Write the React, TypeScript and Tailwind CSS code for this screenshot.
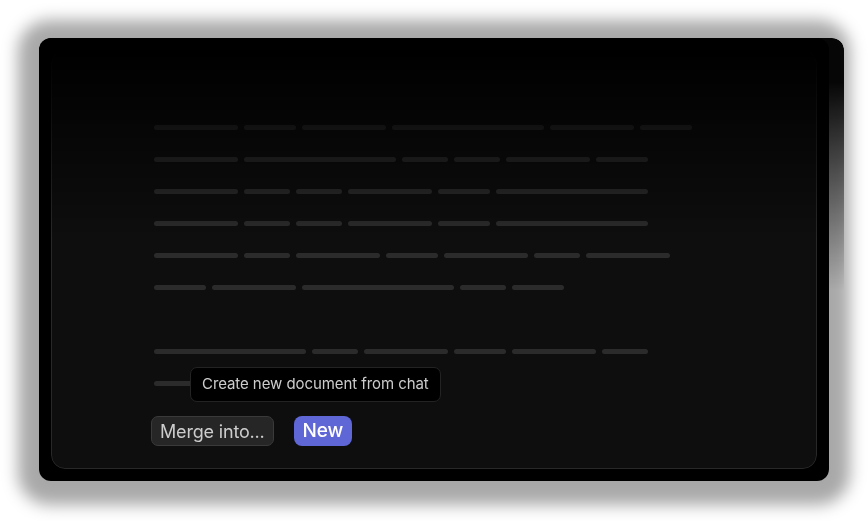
import React from "react";

const rows: number[][] = [
  [84, 52, 84, 152, 84, 52],
  [84, 152, 46, 46, 84, 52],
  [84, 46, 46, 84, 52, 152],
  [84, 46, 46, 84, 52, 152],
  [84, 46, 84, 52, 84, 46, 84],
  [52, 84, 152, 46, 52],
  [],
  [152, 46, 84, 52, 84, 46],
  [84, 46, 84],
];

function Bar({ w }: { w: number }) {
  return <div className="h-[5px] rounded-full bg-[#2b2b2b]" style={{ width: w }} />;
}

export default function App() {
  return (
    <div className="relative h-[521px] w-[868px] overflow-hidden bg-white pl-[39px] pt-[38px] font-['Inter','Noto_Sans',sans-serif]">
      {/* back layer peeking on the right, fading downwards */}
      <div className="absolute left-[39px] top-[38px] h-[443px] w-[805px] rounded-[12px] bg-[#0a0a0a] [mask-image:linear-gradient(to_bottom,black_10%,transparent_57%)]" />

      {/* main card */}
      <div className="relative h-[443px] w-[790px] rounded-[12px] bg-black p-3 shadow-[0_3px_16px_21px_rgba(0,0,0,0.34)]">
        <div className="relative h-full w-full rounded-[14px] border border-[#282828] bg-[#0e0e0e] [mask-image:linear-gradient(to_bottom,transparent_0%,black_45%)]">
          <div className="flex flex-col pl-[102px] pt-[60px]">
            {rows.map((r, i) => (
              <div key={i} className="flex h-[32px] items-center gap-[6px]">
                {r.map((w, j) => (
                  <Bar key={j} w={w} />
                ))}
              </div>
            ))}
            <div className="-ml-[3px] mt-[17px] flex items-center gap-[20px]">
              <button className="flex h-[30px] items-center rounded-[7px] border border-[#3a3a3a] bg-[#262626] px-[8px] text-[18px] tracking-[-0.01em] text-[#cdcdcd]">
                Merge into...
              </button>
              <button className="flex h-[30px] items-center rounded-[8px] bg-[#5f66d6] px-[9px] text-[19px] font-medium tracking-[-0.01em] text-white">
                New
              </button>
            </div>
          </div>

          {/* tooltip */}
          <div className="absolute left-[138px] top-[316px] flex h-[35px] items-center whitespace-nowrap rounded-[7px] border border-[#232323] bg-black px-[11px] text-[15px] tracking-[-0.005em] text-[#cccccc]">
            Create new document from chat
          </div>
        </div>
      </div>
    </div>
  );
}
